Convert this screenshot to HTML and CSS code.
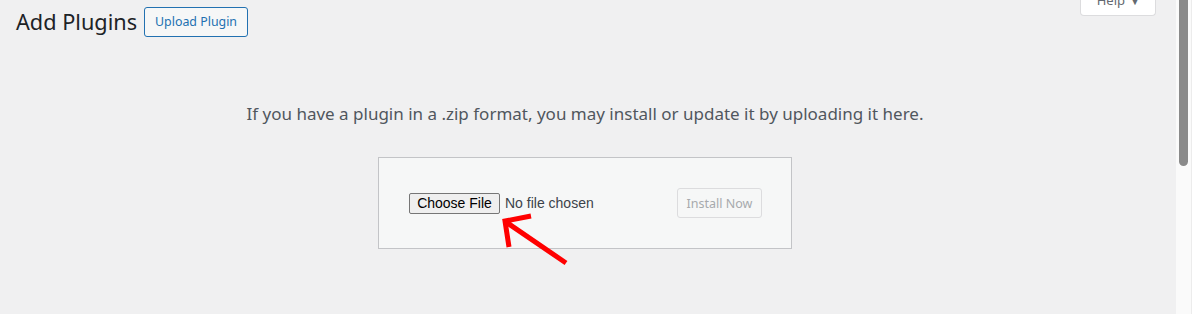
FILE: index.html
```html
<!DOCTYPE html>
<html lang="en">
<head>
<meta charset="utf-8">
<title>Add Plugins</title>
<link rel="stylesheet" href="styles.css">
</head>
<body>
<div class="page">
  <div class="header">
    <div class="title-group">
      <h1 class="title">Add Plugins</h1>
      <button class="upload-btn" type="button">Upload Plugin</button>
    </div>
    <div class="help-tab">Help <span class="caret">▼</span></div>
  </div>
  <p class="install-help">If you have a plugin in a .zip format, you may install or update it by uploading it here.</p>
  <form class="upload-form">
    <div class="file-field">
      <span class="file-btn">Choose File</span>
      <span class="file-name">No file chosen</span>
    </div>
    <button class="install-btn" type="button" disabled>Install Now</button>
  </form>
  <svg class="arrow" width="1176" height="314" viewBox="0 0 1176 314" aria-hidden="true">
    <path d="M566 263 L506 222 M531 216 L505 221 L509 247" fill="none" stroke="#ff0000" stroke-width="5" stroke-linejoin="miter" stroke-linecap="butt"/>
  </svg>
</div>
<div class="scrollbar"><div class="thumb"></div></div>
</body>
</html>
```

FILE: styles.css
```css
html, body {
  margin: 0;
  height: 314px;
  overflow: hidden;
}
body {
  display: flex;
  background: #f0f0f1;
  font-family: "Segoe UI", "Noto Sans", "Open Sans", sans-serif;
  color: #3c434a;
}
.page {
  flex: 1;
  position: relative;
  padding: 0 22px 0 16px;
}
.header {
  display: flex;
  align-items: flex-start;
}
.title-group {
  display: flex;
  align-items: center;
  padding-top: 7px;
}
.title {
  margin: 0 7px 0 0;
  font-size: 21.7px;
  font-weight: 400;
  line-height: 30px;
  color: #1d2327;
}
.upload-btn {
  height: 30px;
  padding: 0 10px;
  border: 1px solid #2271b1;
  border-radius: 3px;
  background: #f6f7f7;
  color: #2271b1;
  font-family: inherit;
  font-size: 12.4px;
  line-height: 28px;
}
.help-tab {
  margin-left: auto;
  margin-right: -2px;
  margin-top: -12px;
  width: 76px;
  box-sizing: border-box;
  height: 28px;
  padding-top: 1px;
  text-align: center;
  background: #fff;
  border: 1px solid #dcdcde;
  border-top: none;
  border-radius: 0 0 4px 4px;
  color: #646970;
  font-size: 13px;
  line-height: 22px;
}
.caret {
  font-size: 9px;
  margin-left: 2px;
}
.install-help {
  margin: 0;
  padding-top: 65px;
  text-align: center;
  font-size: 17px;
  line-height: 24px;
  color: #50575e;
}
.upload-form {
  display: flex;
  justify-content: space-between;
  align-items: center;
  width: 414px;
  box-sizing: border-box;
  margin: 31px auto 0;
  padding: 30px 29px 30px 30px;
  border: 1px solid #c3c4c7;
  background: #f6f7f7;
}
.file-field {
  display: flex;
  align-items: center;
  font-family: "Segoe UI", "Liberation Sans", Arial, sans-serif;
  font-size: 14px;
}
.file-btn {
  display: block;
  box-sizing: border-box;
  width: 91px;
  height: 21px;
  line-height: 19px;
  text-align: center;
  border: 1px solid #767676;
  border-radius: 2px;
  background: #efefef;
  color: #000;
}
.file-name {
  margin-left: 5px;
  color: #3c434a;
}
.install-btn {
  height: 30px;
  width: 85px;
  padding: 0;
  border: 1px solid #dcdcde;
  border-radius: 3px;
  background: #f6f7f7;
  color: #a7aaad;
  font-family: inherit;
  font-size: 12.5px;
}
.arrow {
  position: absolute;
  left: 0;
  top: 0;
  pointer-events: none;
}
.scrollbar {
  width: 16px;
  flex: none;
  background: #fafafa;
  border-right: 1px solid #ececec;
  box-sizing: border-box;
}
.thumb {
  width: 9px;
  height: 166px;
  margin-left: 3px;
  background: #8a8a8a;
  border-radius: 0 0 5px 5px;
}
```
